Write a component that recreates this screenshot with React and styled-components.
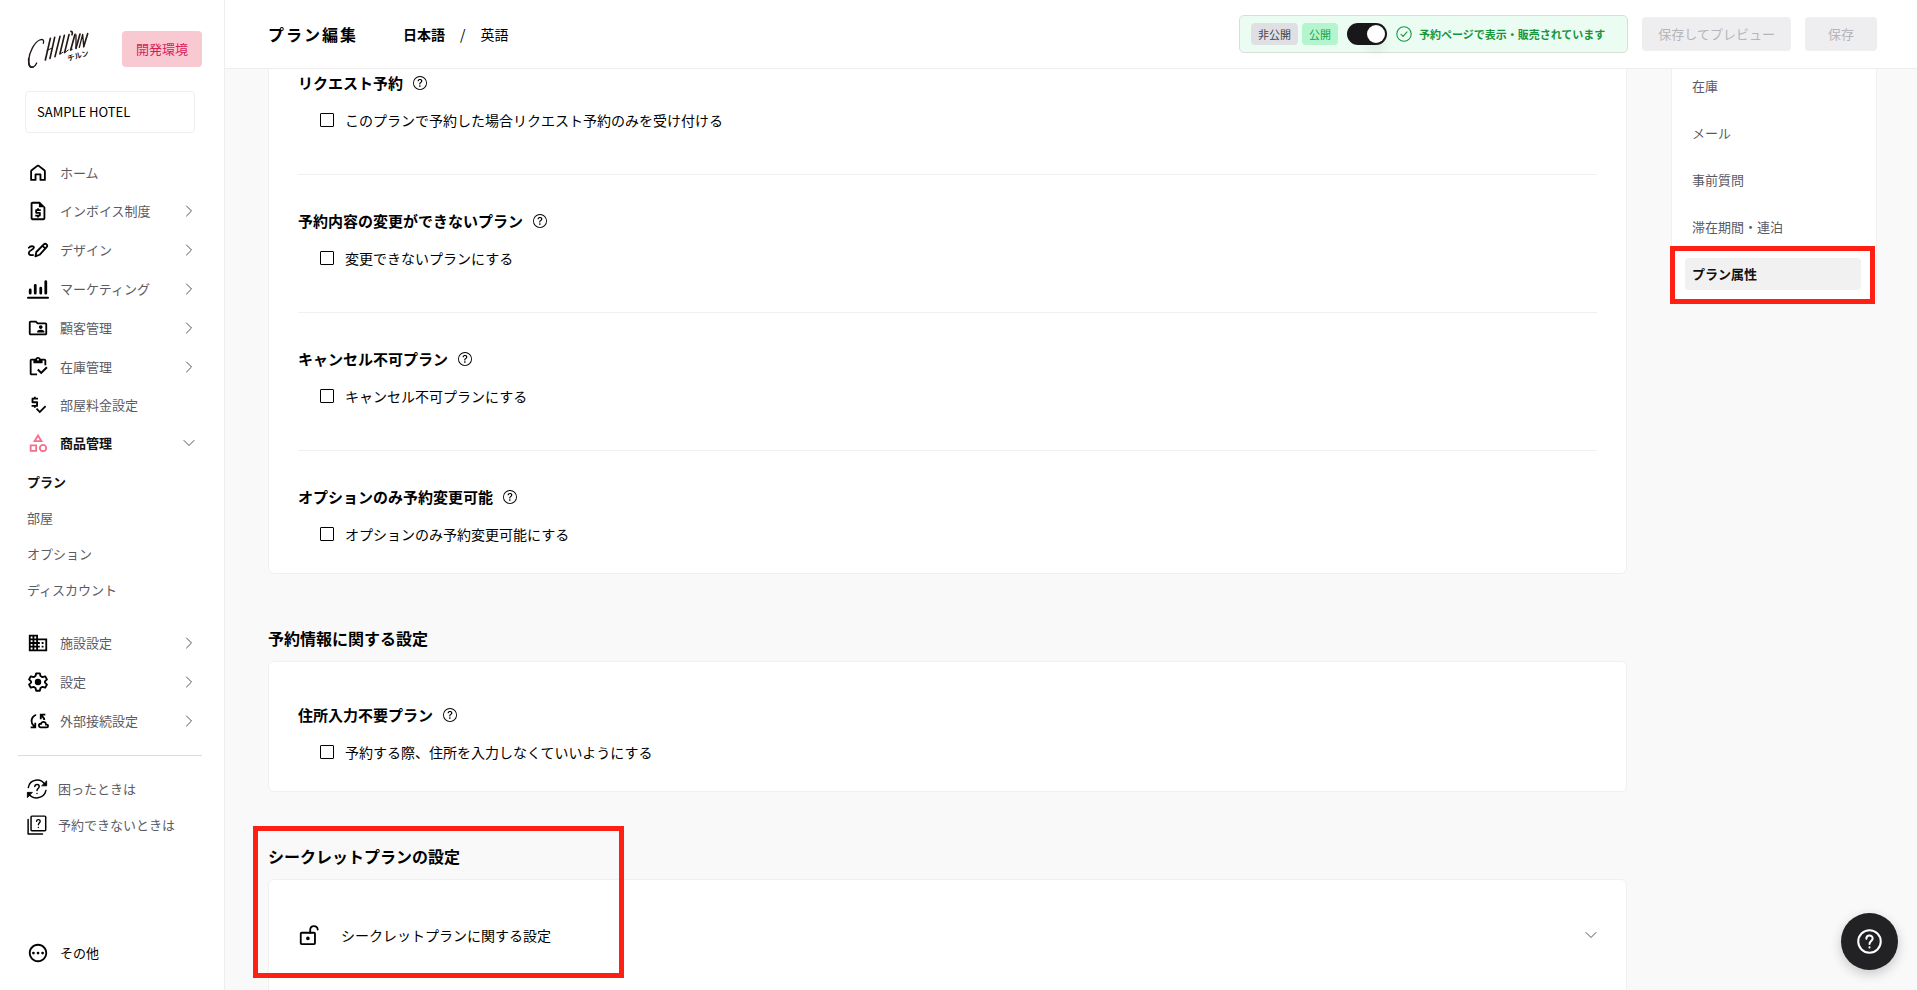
import React from "react";
import styled, { createGlobalStyle, css } from "styled-components";
import {
  MdOutlineRequestQuote,
  MdOutlineFolderShared,
  MdOutlineInventory,
  MdPriceCheck,
  MdOutlineCategory,
  MdOutlineBusiness,
  MdOutlineCloudSync,
  MdOutlinePending,
} from "react-icons/md";
import { BsQuestionCircle } from "react-icons/bs";

const GlobalStyle = createGlobalStyle`
  *, *::before, *::after { box-sizing: border-box; }
  body {
    margin: 0;
    background: #f9f9f9;
    color: #000;
    font-family: "Noto Sans CJK JP", "Noto Sans", sans-serif;
    font-size: 14px;
    line-height: 24px;
  }
  h1, h2, h3, ul { margin: 0; padding: 0; }
  ul { list-style: none; }
  button, input { font: inherit; color: inherit; margin: 0; }
  button { border: 0; background: none; padding: 0; cursor: pointer; }
  a { color: inherit; text-decoration: none; }
`;

const Page = styled.div`
  display: flex;
  height: 100vh;
`;

/* ---------- sidebar ---------- */

const Sidebar = styled.aside`
  display: flex;
  flex-direction: column;
  flex: none;
  width: 225px;
  padding: 28px 0 19px;
  background: #fff;
  border-right: 1px solid #eee;
`;

const Brand = styled.div`
  display: flex;
  align-items: center;
  justify-content: space-between;
  padding: 0 22px 0 27px;
`;

const EnvBadge = styled.span`
  padding: 6px 14px;
  border-radius: 4px;
  background: #f9c9d2;
  color: #d81b57;
  font-size: 13px;
`;

const HotelButton = styled.button`
  margin: 21px 29px 22px 25px;
  padding: 8px 11px;
  border: 1px solid #eee;
  border-radius: 4px;
  background: #fff;
  font-size: 13px;
  text-align: left;
`;

const rowText = css`
  color: ${(p) => (p.$strong ? "#111" : "#5b5b66")};
  font-weight: ${(p) => (p.$strong ? 700 : 400)};
  font-size: 13px;
`;

const NavRow = styled.a`
  display: flex;
  align-items: center;
  gap: 11px;
  height: ${(p) => p.$height}px;
  padding: 0 29px 0 27px;
  ${rowText}
`;

const NavLabel = styled.span`
  flex: 1;
`;

const NavIcon = styled.span`
  display: flex;
  color: ${(p) => (p.$accent ? "#f4708a" : "#000")};
`;

const SubList = styled.ul`
  padding: 2px 0 15px;
`;

const SubLink = styled.a`
  display: flex;
  align-items: center;
  height: 36px;
  padding: 0 27px;
  ${rowText}
`;

const Rule = styled.hr`
  width: auto;
  height: 1px;
  margin: 15px 22px 15px 18px;
  border: 0;
  background: #dcdcde;
`;

const HelpLink = styled.a`
  display: flex;
  align-items: center;
  gap: 10px;
  height: 36px;
  padding: 0 26px;
  ${rowText}
`;

const OtherButton = styled.button`
  display: flex;
  align-items: center;
  gap: 11px;
  height: 36px;
  margin-top: auto;
  padding: 0 27px;
  font-size: 13px;
`;

/* ---------- header ---------- */

const Main = styled.div`
  display: flex;
  flex-direction: column;
  flex: 1;
  min-width: 0;
`;

const Header = styled.header`
  display: flex;
  align-items: center;
  gap: 14px;
  flex: none;
  height: 69px;
  padding: 0 40px 0 43px;
  background: #fff;
  border-bottom: 1px solid #eee;
`;

const Title = styled.h1`
  font-size: 16px;
  font-weight: 700;
  letter-spacing: 2px;
`;

const Languages = styled.nav`
  display: flex;
  gap: 15px;
  margin: 0 auto 0 31px;
`;

const LanguageLink = styled.a`
  font-weight: ${(p) => (p.$current ? 700 : 400)};
`;

const StatusBox = styled.div`
  display: flex;
  align-items: center;
  height: 38px;
  padding: 0 22px 0 11px;
  border: 1px solid #d9dedb;
  border-radius: 5px;
  background: #ebfdf2;
`;

const StateTag = styled.span`
  margin-right: ${(p) => (p.$on ? 9 : 4)}px;
  padding: 0 7px;
  border-radius: 4px;
  background: ${(p) => (p.$on ? "#b4f5cd" : "#e0e0e4")};
  color: ${(p) => (p.$on ? "#16a34a" : "#3f3f46")};
  font-size: 11px;
  line-height: 22px;
`;

const Toggle = styled.input`
  appearance: none;
  width: 40px;
  height: 22px;
  padding: 2px;
  border-radius: 11px;
  background: #18181b;
  cursor: pointer;
  &::before {
    content: "";
    display: block;
    width: 18px;
    height: 18px;
    margin-left: 18px;
    border-radius: 50%;
    background: #fff;
    box-shadow: 0 8px 12px rgba(0, 0, 0, 0.08);
  }
`;

const StatusText = styled.span`
  display: flex;
  align-items: center;
  gap: 7px;
  margin-left: 9px;
  color: #16953f;
  font-size: 11px;
  font-weight: 700;
`;

const SaveButton = styled.button`
  height: 34px;
  padding: 0 ${(p) => (p.$wide ? 16 : 23)}px;
  border-radius: 4px;
  background: #eeeef0;
  color: #b5b5ba;
  font-size: 13px;
`;

/* ---------- content ---------- */

const Scroller = styled.div`
  display: flex;
  align-items: flex-start;
  gap: 44px;
  flex: 1;
  min-height: 0;
  padding: 0 40px 0 43px;
  overflow-y: auto;
  scrollbar-width: none;
`;

const Sections = styled.main`
  flex: 1;
  min-width: 0;
`;

const Section = styled.section`
  position: relative;
  margin-bottom: 52px;
`;

const SectionTitle = styled.h2`
  margin-bottom: 11px;
  font-size: 16px;
  font-weight: 700;
`;

const Card = styled.div`
  padding: ${(p) => (p.$continued ? "0 29px 27px" : "7px 29px 27px")};
  border: 1px solid #f0f0f0;
  border-radius: 6px;
  background: #fff;
  ${(p) =>
    p.$continued &&
    css`
      border-top: 0;
      border-top-left-radius: 0;
      border-top-right-radius: 0;
    `}
`;

const Setting = styled.div`
  padding: 34px 0 42px;
  border-bottom: 1px solid #f0f0f0;
  &:first-child {
    padding-top: ${(p) => (p.$continued ? 2 : 34)}px;
  }
  &:last-child {
    padding-bottom: 0;
    border-bottom: 0;
  }
`;

const SettingTitle = styled.h3`
  display: flex;
  align-items: center;
  gap: 10px;
  margin-bottom: 13px;
  font-size: 15px;
  font-weight: 700;
`;

const HintButton = styled.button`
  display: flex;
`;

const Option = styled.label`
  display: flex;
  align-items: center;
  width: fit-content;
  gap: 11px;
  padding-left: 22px;
  cursor: pointer;
`;

const Tick = styled.input`
  appearance: none;
  width: 14px;
  height: 14px;
  border: 1px solid #000;
  border-radius: 1px;
  background: #fff;
  &:checked { background: #000; }
`;

const Accordion = styled.button`
  display: flex;
  align-items: center;
  width: 100%;
  height: 96px;
  gap: 21px;
  text-align: left;
`;

const AccordionLabel = styled.span`
  flex: 1;
`;

const PanelNav = styled.nav`
  position: relative;
  flex: none;
  width: 206px;
  padding: 1px 15px 13px 13px;
  border: 1px solid #f0f0f0;
  border-top: 0;
  border-radius: 0 0 4px 4px;
  background: #fff;
`;

const PanelList = styled.ul`
  display: grid;
  gap: 15px;
`;

const PanelLink = styled.a`
  display: flex;
  align-items: center;
  height: 32px;
  padding: 0 7px;
  border-radius: 4px;
  background: ${(p) => (p.$strong ? "#f1f1f1" : "none")};
  ${rowText}
`;

const Highlight = styled.div`
  position: absolute;
  border: 5px solid #ff2015;
  pointer-events: none;
`;

const PanelHighlight = styled(Highlight)`
  left: -2px;
  right: 1px;
  bottom: -1px;
  height: 58px;
`;

const SectionHighlight = styled(Highlight)`
  top: -18px;
  left: -15px;
  width: 371px;
  height: 152px;
`;

const HelpFab = styled.button`
  position: fixed;
  right: 19px;
  bottom: 20px;
  display: flex;
  align-items: center;
  justify-content: center;
  width: 57px;
  height: 57px;
  border-radius: 50%;
  background: #222224;
  color: #fff;
  box-shadow: 0 4px 12px rgba(0, 0, 0, 0.2);
`;

/* ---------- drawings ---------- */

const Stroke = ({ size = 22, width = 2, children }) => (
  <svg
    width={size}
    height={size}
    viewBox="0 0 24 24"
    fill="none"
    stroke="currentColor"
    strokeWidth={width}
    strokeLinecap="round"
    strokeLinejoin="round"
    aria-hidden="true"
  >
    {children}
  </svg>
);

const Logo = () => (
  <svg width="64" height="42" viewBox="0 0 192 126" fill="none" stroke="#231815" strokeLinecap="round" role="img" aria-label="CHILLNN">
    <path d="M49 46C52 36 48 32 38 36C22 43 7 72 5 96C3 114 10 121 19 117C23 115 27 110 29 105" strokeWidth="4" />
    <path d="M5 92C4 112 9 120 18 117" strokeWidth="5" />
    <g strokeWidth="5">
      <path d="M70 31L55 96M83 28L69 91M99 25L84 86M112 22L99 77M126 20L113 73" />
      <path d="M144 19L131 66M159 18L147 61M182 17L170 56" />
    </g>
    <path d="M60 67L76 60M99 78L108 73M113 74L124 66M131 66L136 64" strokeWidth="3" />
    <path d="M147 21L147 60M167 19L170 54M157 58L167 19" strokeWidth="4" />
    <path d="M132 10Q138 11 135 20" strokeWidth="5" />
    <g stroke="none" fill="#231815">
      <text x="124" y="100" fontSize="22" fontWeight="700" transform="rotate(-16 124 100)">チルン</text>
    </g>
  </svg>
);

const HomeIcon = () => (
  <Stroke>
    <path d="M4.500 10.300Q4.500 9.500 5.100 9L11.200 4.200Q12 3.600 12.800 4.200L18.900 9Q19.500 9.500 19.500 10.300V19.500H14.700V13.500H9.300V19.500H4.500Z" />
  </Stroke>
);

const DesignIcon = () => (
  <Stroke>
    <path d="M2 9.500C3.500 7.500 7.800 7.200 7.500 9.500C7.200 12 2 12.200 2 15.200C2 17.200 4 18 6.500 17.500" />
    <path d="M9.200 19L10.200 14.200L18.600 5.700Q19.800 4.600 21.300 5.900Q22.700 7.200 21.600 8.600L13.700 17.200Z" />
    <path d="M17 7.500L19.800 10.200" />
  </Stroke>
);

const BarsIcon = () => (
  <Stroke>
    <path d="M1 21.500H23" strokeWidth="2" />
    <path d="M3.500 13V16.500M9 8V16.500M15 11V16.500M20.500 4V16.500" strokeWidth="3" />
  </Stroke>
);

const GearIcon = () => (
  <Stroke>
    <path d="M10 2.500H14L14.700 5.500L16.800 6.700L19.800 5.800L21.800 9.200L19.600 11.300V12.700L21.800 14.800L19.800 18.200L16.800 17.300L14.700 18.500L14 21.500H10L9.300 18.500L7.200 17.300L4.200 18.200L2.200 14.800L4.400 12.700V11.300L2.200 9.200L4.200 5.800L7.200 6.700L9.300 5.500Z" />
    <circle cx="12" cy="12" r="2.500" fill="currentColor" />
  </Stroke>
);

const TroubleIcon = () => (
  <Stroke width={1.6}>
    <path d="M2.500 10.500A9.700 9.700 0 0 1 20.500 7.200M2.500 16.500A10.500 10.500 0 0 0 21.800 13.500" />
    <path d="M22.500 3.500V8.500H17.500ZM1.500 21V15.700H6.500Z" fill="currentColor" strokeWidth="1" />
    <path d="M9.600 9.300C9.800 6.400 14.400 6.400 14.400 9.300C14.400 11.300 12 11.600 12 13.600M12 16.800V17" />
  </Stroke>
);

const FaqIcon = () => (
  <Stroke width={1.6}>
    <rect x="5.500" y="2.300" width="16" height="16" rx="1" />
    <path d="M2.300 6V21.700H18" />
    <path d="M11.500 8C11.700 5.500 15.500 5.500 15.500 8C15.500 9.700 13.500 10 13.500 11.800M13.500 14.700V14.800" strokeWidth="1.500" />
  </Stroke>
);

const UnlockIcon = () => (
  <Stroke>
    <rect x="3" y="9.500" width="15.500" height="12.500" rx="1" />
    <path d="M13.300 9.500V6.500C13.300 1 21.500 1 21.500 6" />
    <circle cx="10.800" cy="15.700" r="1" fill="currentColor" />
  </Stroke>
);

const HelpIcon = () => (
  <Stroke size={27} width={1.8}>
    <circle cx="12" cy="12" r="10" />
    <path d="M9.200 9.500C9.300 5.800 14.800 5.900 14.800 9.300C14.800 11.500 12 11.700 12 14.200M12 17.200V17.300" />
  </Stroke>
);

const CheckCircle = () => (
  <Stroke size={16} width={1.6}>
    <circle cx="12" cy="12" r="10.800" />
    <path d="M7.500 12.500L10.700 15.700L16.500 8.800" />
  </Stroke>
);

const Chevron = ({ down }) => (
  <svg width="12" height="12" viewBox="0 0 12 12" fill="none" stroke="#52525b" strokeLinecap="round" strokeLinejoin="round" aria-hidden="true">
    <path d={down ? "M1 3.500L6 8.500L11 3.500" : "M3.500 1L8.500 6L3.500 11"} />
  </svg>
);

/* ---------- data ---------- */

const icon = (Glyph) => <Glyph size={22} />;

const topMenu = [
  { label: "ホーム", icon: <HomeIcon />, height: 36 },
  { label: "インボイス制度", icon: icon(MdOutlineRequestQuote), height: 39, more: true },
  { label: "デザイン", icon: <DesignIcon />, height: 39, more: true },
  { label: "マーケティング", icon: <BarsIcon />, height: 39, more: true },
  { label: "顧客管理", icon: icon(MdOutlineFolderShared), height: 39, more: true },
  { label: "在庫管理", icon: icon(MdOutlineInventory), height: 39, more: true },
  { label: "部屋料金設定", icon: icon(MdPriceCheck), height: 38 },
  { label: "商品管理", icon: icon(MdOutlineCategory), height: 38, more: true, open: true },
];

const productMenu = ["プラン", "部屋", "オプション", "ディスカウント"];

const bottomMenu = [
  { label: "施設設定", icon: icon(MdOutlineBusiness), height: 39, more: true },
  { label: "設定", icon: <GearIcon />, height: 39, more: true },
  { label: "外部接続設定", icon: icon(MdOutlineCloudSync), height: 39, more: true },
];

const bookingSettings = [
  ["リクエスト予約", "このプランで予約した場合リクエスト予約のみを受け付ける"],
  ["予約内容の変更ができないプラン", "変更できないプランにする"],
  ["キャンセル不可プラン", "キャンセル不可プランにする"],
  ["オプションのみ予約変更可能", "オプションのみ予約変更可能にする"],
];

const addressSettings = [["住所入力不要プラン", "予約する際、住所を入力しなくていいようにする"]];

const panelItems = ["在庫", "メール", "事前質問", "滞在期間・連泊", "プラン属性"];

const Menu = ({ items }) => (
  <ul>
    {items.map((item) => (
      <li key={item.label}>
        <NavRow href="#" $height={item.height} $strong={item.open}>
          <NavIcon $accent={item.open}>{item.icon}</NavIcon>
          <NavLabel>{item.label}</NavLabel>
          {item.more && <Chevron down={item.open} />}
        </NavRow>
      </li>
    ))}
  </ul>
);

const SettingsCard = ({ items, continued }) => (
  <Card $continued={continued}>
    {items.map(([title, option]) => (
      <Setting key={title} $continued={continued}>
        <SettingTitle>
          {title}
          <HintButton type="button" aria-label={`${title}の説明`}>
            <BsQuestionCircle size={14} />
          </HintButton>
        </SettingTitle>
        <Option>
          <Tick type="checkbox" />
          {option}
        </Option>
      </Setting>
    ))}
  </Card>
);

export default function App() {
  return (
    <>
      <GlobalStyle />
      <Page>
        <Sidebar>
          <Brand>
            <Logo />
            <EnvBadge>開発環境</EnvBadge>
          </Brand>
          <HotelButton type="button">SAMPLE HOTEL</HotelButton>
          <nav>
            <Menu items={topMenu} />
            <SubList>
              {productMenu.map((label, i) => (
                <li key={label}>
                  <SubLink href="#" $strong={i === 0}>{label}</SubLink>
                </li>
              ))}
            </SubList>
            <Menu items={bottomMenu} />
          </nav>
          <Rule />
          <HelpLink href="#">
            <NavIcon><TroubleIcon /></NavIcon>
            困ったときは
          </HelpLink>
          <HelpLink href="#">
            <NavIcon><FaqIcon /></NavIcon>
            予約できないときは
          </HelpLink>
          <OtherButton type="button">
            <NavIcon><MdOutlinePending size={22} /></NavIcon>
            その他
          </OtherButton>
        </Sidebar>

        <Main>
          <Header>
            <Title>プラン編集</Title>
            <Languages>
              <LanguageLink href="#" $current>日本語</LanguageLink>
              <span>/</span>
              <LanguageLink href="#">英語</LanguageLink>
            </Languages>
            <StatusBox>
              <StateTag>非公開</StateTag>
              <StateTag $on>公開</StateTag>
              <Toggle type="checkbox" role="switch" defaultChecked aria-label="公開" />
              <StatusText>
                <CheckCircle />
                予約ページで表示・販売されています
              </StatusText>
            </StatusBox>
            <SaveButton type="button" $wide>保存してプレビュー</SaveButton>
            <SaveButton type="button">保存</SaveButton>
          </Header>

          <Scroller>
            <Sections>
              <Section>
                <SettingsCard items={bookingSettings} continued />
              </Section>
              <Section>
                <SectionTitle>予約情報に関する設定</SectionTitle>
                <SettingsCard items={addressSettings} />
              </Section>
              <Section>
                <SectionTitle>シークレットプランの設定</SectionTitle>
                <Card>
                  <Accordion type="button" aria-expanded="false">
                    <UnlockIcon />
                    <AccordionLabel>シークレットプランに関する設定</AccordionLabel>
                    <Chevron down />
                  </Accordion>
                </Card>
                <SectionHighlight />
              </Section>
            </Sections>
            <PanelNav>
              <PanelList>
                {panelItems.map((label) => (
                  <li key={label}>
                    <PanelLink href="#" $strong={label === "プラン属性"}>{label}</PanelLink>
                  </li>
                ))}
              </PanelList>
              <PanelHighlight />
            </PanelNav>
          </Scroller>
        </Main>
      </Page>
      <HelpFab type="button" aria-label="ヘルプ">
        <HelpIcon />
      </HelpFab>
    </>
  );
}
